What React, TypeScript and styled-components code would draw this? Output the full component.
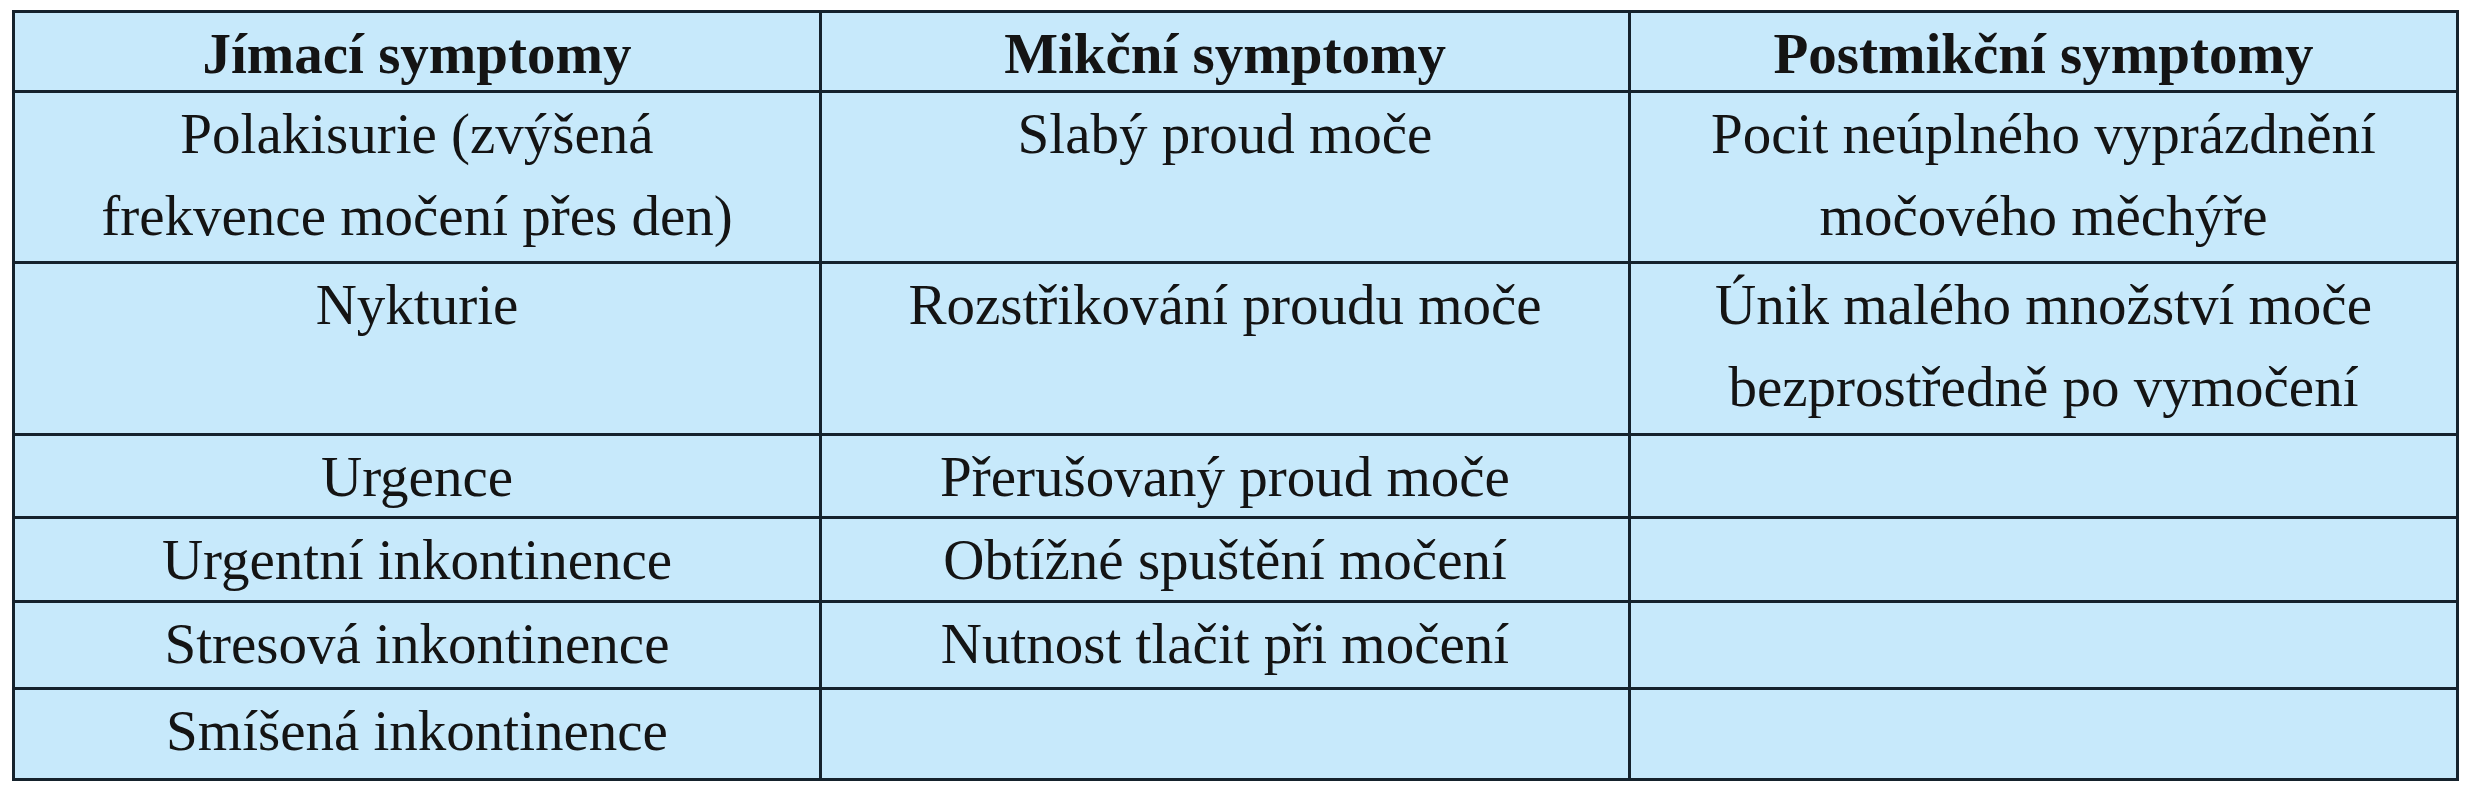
import React from "react";
import styled, { createGlobalStyle } from "styled-components";

const Global = createGlobalStyle`
  html, body {
    margin: 0;
    padding: 0;
    background: #ffffff;
  }
  body {
    padding: 10px 0 0 12px;
  }
`;

const Table = styled.div`
  display: grid;
  width: 2447px;
  box-sizing: border-box;
  grid-template-columns: 804px 806px 825px;
  grid-template-rows: 77px 168px 169px 80px 81px 84px 88px;
  gap: 3px;
  padding: 3px;
  background: #15222c;
  font-family: "Liberation Serif", "Times New Roman", serif;
  font-size: 57px;
  line-height: 82px;
  color: #141414;
`;

const Row = styled.div`
  display: contents;
`;

const Cell = styled.div<{ $head?: boolean }>`
  background: #c7e9fb;
  text-align: center;
  font-weight: ${(p) => (p.$head ? 700 : 400)};
  white-space: nowrap;
  overflow: hidden;
`;

const header = ["Jímací symptomy", "Mikční symptomy", "Postmikční symptomy"];

const rows: string[][][] = [
  [
    ["Polakisurie (zvýšená", "frekvence močení přes den)"],
    ["Slabý proud moče"],
    ["Pocit neúplného vyprázdnění", "močového měchýře"],
  ],
  [
    ["Nykturie"],
    ["Rozstřikování proudu moče"],
    ["Únik malého množství moče", "bezprostředně po vymočení"],
  ],
  [["Urgence"], ["Přerušovaný proud moče"], []],
  [["Urgentní inkontinence"], ["Obtížné spuštění močení"], []],
  [["Stresová inkontinence"], ["Nutnost tlačit při močení"], []],
  [["Smíšená inkontinence"], [], []],
];

export default function App() {
  return (
    <>
      <Global />
      <Table>
        <Row>
          {header.map((h) => (
            <Cell key={h} $head>
              {h}
            </Cell>
          ))}
        </Row>
        {rows.map((r, i) => (
          <Row key={i}>
            {r.map((lines, j) => (
              <Cell key={j}>
                {lines.map((l, k) => (
                  <React.Fragment key={k}>
                    {k > 0 && <br />}
                    {l}
                  </React.Fragment>
                ))}
              </Cell>
            ))}
          </Row>
        ))}
      </Table>
    </>
  );
}
